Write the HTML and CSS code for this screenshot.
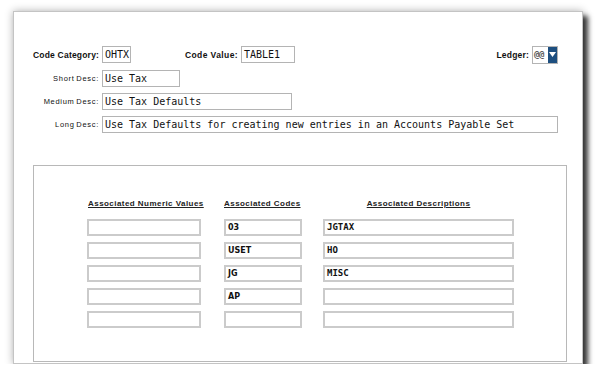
FILE: index.html
```html
<!doctype html>
<html>

<head>
	<meta charset="utf-8" />
	<link rel="stylesheet" href="styles.css">
</head>

<body>

	<div class="window">

		<div class="head-row">
			<label class="lbl lbl-bold lbl-cat">Code Category:</label>
			<div class="field f-cat">OHTX</div>
			<label class="lbl lbl-bold lbl-val">Code Value:</label>
			<div class="field f-val">TABLE1</div>
			<label class="lbl lbl-bold lbl-ledger">Ledger:</label>
			<div class="ledger">
				<span class="ledger-text">@@</span>
				<span class="ledger-btn">
					<svg width="7" height="5" viewBox="0 0 7 5"><path d="M0 0 H7 L3.5 5 Z" fill="#fff" /></svg>
				</span>
			</div>
		</div>

		<div class="desc-row">
			<label class="lbl lbl-desc">Short Desc:</label>
			<div class="field f-short">Use Tax</div>
		</div>

		<div class="desc-row">
			<label class="lbl lbl-desc">Medium Desc:</label>
			<div class="field f-medium">Use Tax Defaults</div>
		</div>

		<div class="desc-row">
			<label class="lbl lbl-desc">Long Desc:</label>
			<div class="field f-long">Use Tax Defaults for creating new entries in an Accounts Payable Set</div>
		</div>

		<div class="panel">
			<div class="assoc">
				<div class="col-head h-num">Associated Numeric Values</div>
				<div class="col-head h-code">Associated Codes</div>
				<div class="col-head h-desc">Associated Descriptions</div>

				<div class="cell c-num"></div>
				<div class="cell c-code">03</div>
				<div class="cell c-desc">JGTAX</div>

				<div class="cell c-num"></div>
				<div class="cell c-code">USET</div>
				<div class="cell c-desc">HO</div>

				<div class="cell c-num"></div>
				<div class="cell c-code">JG</div>
				<div class="cell c-desc">MISC</div>

				<div class="cell c-num"></div>
				<div class="cell c-code">AP</div>
				<div class="cell c-desc"></div>

				<div class="cell c-num"></div>
				<div class="cell c-code"></div>
				<div class="cell c-desc"></div>
			</div>
		</div>

	</div>

</body>

</html>
```

FILE: styles.css
```css
* {
	box-sizing: border-box;
}

body {
	margin: 0;
	background: #fff;
	font-family: 'Liberation Sans', Arial, sans-serif;
}

.window {
	margin: 11px 0 0 13px;
	width: 570px;
	height: 353px;
	padding: 34px 0 0 19px;
	background: #fff;
	border: 1px solid #c4c4c4;
	box-shadow: 0 0 8px rgba(0, 0, 0, 0.3), 5px 5px 5px rgba(0, 0, 0, 0.75);
}

.head-row,
.desc-row {
	display: flex;
	align-items: center;
	height: 17px;
}

.desc-row {
	margin-top: 6px;
}

.head-row + .desc-row {
	margin-top: 7px;
}

.lbl {
	font-size: 8px;
	color: #111;
	white-space: nowrap;
}

.lbl-bold {
	font-weight: bold;
	font-size: 8.5px;
	letter-spacing: 0.2px;
}

.lbl-cat {
	width: 66px;
	text-align: right;
	margin-right: 3px;
}

.lbl-val {
	width: 56px;
	margin-left: 51px;
	text-align: right;
	margin-right: 3px;
	letter-spacing: 0.4px;
}

.lbl-ledger {
	margin-left: auto;
	margin-right: 3px;
}

.lbl-desc {
	width: 66px;
	text-align: right;
	margin-right: 3px;
	font-size: 7.5px;
	letter-spacing: 0.7px;
	word-spacing: -1px;
}

.field {
	height: 17px;
	border: 1px solid #b4b4b4;
	padding: 0 2px;
	font-family: 'DejaVu Sans Mono', monospace;
	font-size: 10px;
	line-height: 15px;
	color: #111;
	white-space: nowrap;
	overflow: hidden;
}

.f-cat { width: 29px; }
.f-val { width: 54px; }
.f-short { width: 78px; }
.f-medium { width: 190px; }
.f-long { width: 456px; }

.ledger {
	display: flex;
	width: 26px;
	height: 18px;
	margin-right: 24px;
	border: 1px solid #b4b4b4;
}

.ledger-text {
	flex: 1;
	font-family: 'DejaVu Sans Mono', monospace;
	font-weight: bold;
	font-size: 9px;
	line-height: 16px;
	color: #555;
	padding-left: 1px;
	letter-spacing: -0.5px;
}

.ledger-btn {
	width: 9px;
	background: #1d4f80;
	display: flex;
	align-items: center;
	justify-content: center;
}

.panel {
	margin-top: 32px;
	width: 534px;
	height: 197px;
	border: 1px solid #b8b8b8;
	padding: 33px 0 0 53px;
}

.assoc {
	display: grid;
	grid-template-columns: 137px 99px 191px;
	row-gap: 6px;
	align-items: start;
}

.col-head {
	font-size: 8px;
	font-weight: bold;
	text-decoration: underline;
	letter-spacing: 0.45px;
	color: #222;
	height: 13px;
	margin-bottom: 1px;
	white-space: nowrap;
}

.h-num { padding-left: 1px; }
.h-desc { text-align: center; }

.cell {
	height: 17px;
	border: 2px solid #cbcbcb;
	padding: 0 2px;
	font-size: 9px;
	line-height: 13px;
	color: #111;
}

.c-num { width: 114px; }

.c-code {
	width: 78px;
	font-family: 'DejaVu Sans', sans-serif;
	font-weight: bold;
	font-size: 8px;
}

.c-desc {
	width: 191px;
	font-family: 'DejaVu Sans Mono', monospace;
	font-weight: bold;
	font-size: 9px;
}
```
